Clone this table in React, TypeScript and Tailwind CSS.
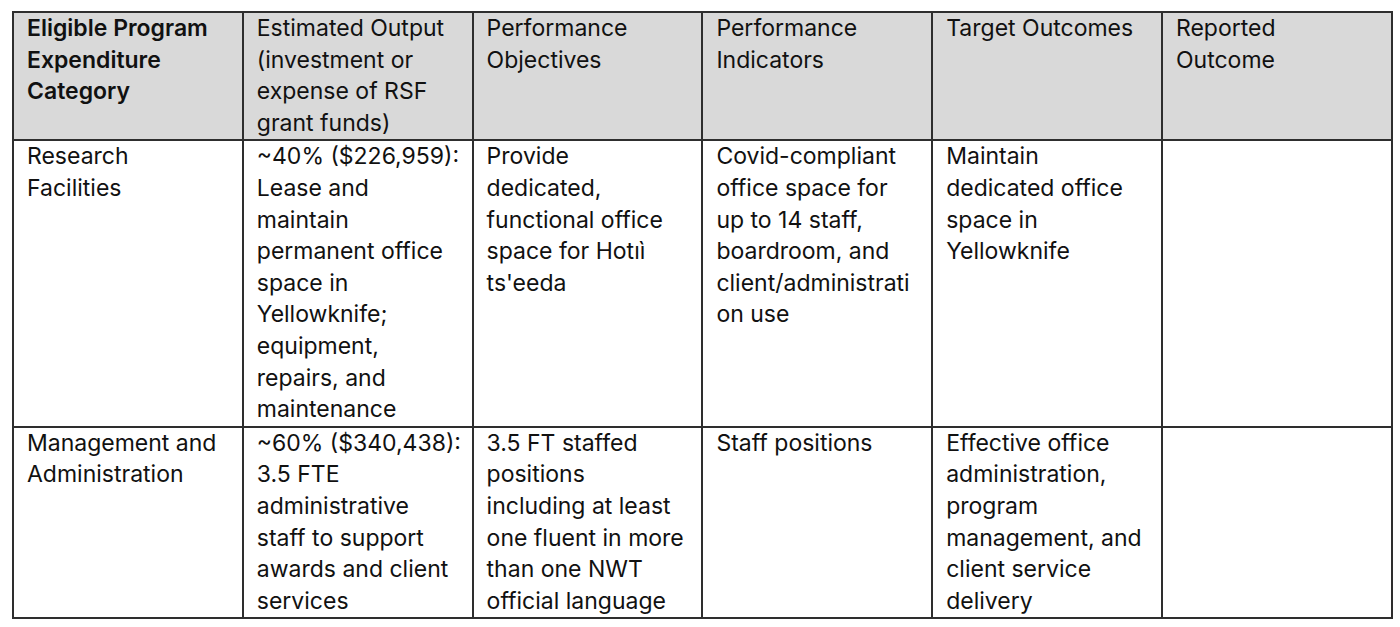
import React from 'react';

type Cell = string[];

const header: Cell[] = [
  ['Eligible Program', 'Expenditure', 'Category'],
  ['Estimated Output', '(investment or', 'expense of RSF', 'grant funds)'],
  ['Performance', 'Objectives'],
  ['Performance', 'Indicators'],
  ['Target Outcomes'],
  ['Reported', 'Outcome'],
];

const rows: Cell[][] = [
  [
    ['Research', 'Facilities'],
    ['~40% ($226,959):', 'Lease and', 'maintain', 'permanent office', 'space in', 'Yellowknife;', 'equipment,', 'repairs, and', 'maintenance'],
    ['Provide', 'dedicated,', 'functional office', 'space for Hotıì', "ts'eeda"],
    ['Covid-compliant', 'office space for', 'up to 14 staff,', 'boardroom, and', 'client/administrati', 'on use'],
    ['Maintain', 'dedicated office', 'space in', 'Yellowknife'],
    [],
  ],
  [
    ['Management and', 'Administration'],
    ['~60% ($340,438):', '3.5 FTE', 'administrative', 'staff to support', 'awards and client', 'services'],
    ['3.5 FT staffed', 'positions', 'including at least', 'one fluent in more', 'than one NWT', 'official language'],
    ['Staff positions'],
    ['Effective office', 'administration,', 'program', 'management, and', 'client service', 'delivery'],
    [],
  ],
];

const Lines = ({ lines }: { lines: Cell }) => (
  <>
    {lines.map((l, i) => (
      <div key={i} className="whitespace-nowrap">{l}</div>
    ))}
  </>
);

export default function App() {
  return (
    <div className="w-[1400px] h-[627px] bg-white pl-[12px] pt-[11px] font-['Inter','Liberation_Sans',sans-serif] text-[23px] leading-[31.6px] text-[#111]">
      <table className="border-collapse table-fixed w-[1379px]">
        <colgroup>
          {header.map((_, i) => (
            <col key={i} className="w-[229.8px]" />
          ))}
        </colgroup>
        <thead>
          <tr className="bg-[#d9d9d9]">
            {header.map((c, i) => (
              <th
                key={i}
                className={`border-2 border-[#2e2e2e] px-[13px] py-0 text-left align-top ${i === 0 ? 'font-semibold' : 'font-normal'}`}
              >
                <Lines lines={c} />
              </th>
            ))}
          </tr>
        </thead>
        <tbody>
          {rows.map((r, ri) => (
            <tr key={ri}>
              {r.map((c, ci) => (
                <td key={ci} className="border-2 border-[#2e2e2e] px-[13px] py-0 align-top">
                  <Lines lines={c} />
                </td>
              ))}
            </tr>
          ))}
        </tbody>
      </table>
    </div>
  );
}
